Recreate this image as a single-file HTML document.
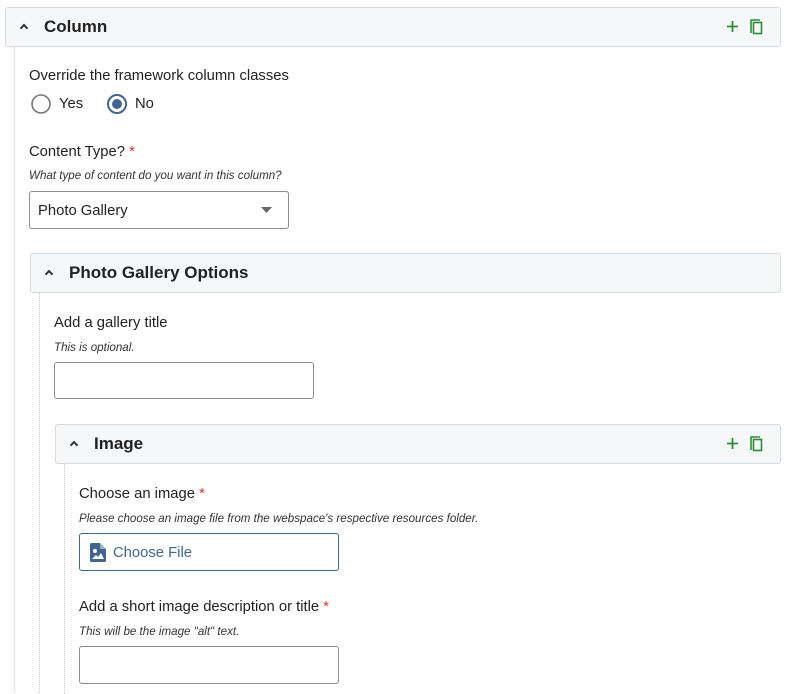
<!DOCTYPE html>
<html><head><meta charset="utf-8"><style>
*{box-sizing:border-box;margin:0;padding:0}
body{width:790px;height:692px;background:#fff;font-family:"Liberation Sans",sans-serif;color:#222;position:relative;overflow:hidden}
.a{position:absolute}
.hdr{position:absolute;background:#f6f7f9;border:1px solid #d6d9de;border-radius:3px;height:40px}
.hdr .t{position:absolute;left:38px;top:9px;font-size:17px;font-weight:bold;color:#222}
.hdr .car{position:absolute;left:15px;top:17px;width:6px;height:6px;border-left:2px solid #333;border-top:2px solid #333;transform:rotate(45deg)}
.dot{position:absolute;border-left:1px dotted #c8cbcf;width:0}
.lbl{position:absolute;font-size:14.8px;color:#222}
.req{color:#d0342c}
.hint{position:absolute;font-size:11.6px;font-style:italic;color:#333}
.inp{position:absolute;border:1px solid #8a8d91;border-radius:3px;background:#fff}
.icons{position:absolute;right:16px;top:9px}
</style></head><body>

<div class="hdr" style="left:5px;top:7px;width:776px"><div class="car"></div><div class="t">Column</div>
<svg class="icons" width="40" height="20" viewBox="0 0 40 20"><path d="M3 9.5h11M8.5 4v11" stroke="#2f8a3a" stroke-width="1.8"/><path d="M27 16V3h9" fill="none" stroke="#2f8a3a" stroke-width="1.6"/><rect x="29.5" y="5.5" width="8" height="11" fill="none" stroke="#2f8a3a" stroke-width="1.6"/></svg></div>
<div class="dot" style="left:14px;top:47px;height:645px"></div>

<div class="lbl" style="left:29px;top:68px">Override the framework column classes</div>
<svg class="a" style="left:30px;top:93px" width="22" height="22"><circle cx="11" cy="11" r="9" fill="#fff" stroke="#777" stroke-width="1.6"/></svg>
<div class="lbl" style="left:59px;top:96px">Yes</div>
<svg class="a" style="left:106px;top:93px" width="22" height="22"><circle cx="11" cy="11" r="9" fill="#fff" stroke="#40668f" stroke-width="2"/><circle cx="11" cy="11" r="5" fill="#40668f"/></svg>
<div class="lbl" style="left:135px;top:96px">No</div>

<div class="lbl" style="left:29px;top:144px">Content Type? <span class="req">*</span></div>
<div class="hint" style="left:29px;top:169px">What type of content do you want in this column?</div>
<div class="inp" style="left:29px;top:191px;width:260px;height:38px"><span class="a" style="left:8px;top:11px;font-size:14.8px">Photo Gallery</span>
<svg class="a" style="left:231px;top:14px" width="12" height="8"><path d="M0 1h11L5.5 7z" fill="#666"/></svg></div>

<div class="hdr" style="left:30px;top:253px;width:751px"><div class="car"></div><div class="t">Photo Gallery Options</div></div>
<div class="dot" style="left:39px;top:293px;height:400px"></div>

<div class="lbl" style="left:54px;top:315px">Add a gallery title</div>
<div class="hint" style="left:54px;top:341px">This is optional.</div>
<div class="inp" style="left:54px;top:362px;width:260px;height:37px"></div>

<div class="hdr" style="left:55px;top:424px;width:726px"><div class="car"></div><div class="t">Image</div>
<svg class="icons" width="40" height="20" viewBox="0 0 40 20"><path d="M3 9.5h11M8.5 4v11" stroke="#2f8a3a" stroke-width="1.8"/><path d="M27 16V3h9" fill="none" stroke="#2f8a3a" stroke-width="1.6"/><rect x="29.5" y="5.5" width="8" height="11" fill="none" stroke="#2f8a3a" stroke-width="1.6"/></svg></div>
<div class="dot" style="left:64px;top:464px;height:230px"></div>

<div class="lbl" style="left:79px;top:486px">Choose an image <span class="req">*</span></div>
<div class="hint" style="left:79px;top:512px">Please choose an image file from the webspace's respective resources folder.</div>
<div class="inp" style="left:79px;top:533px;width:260px;height:38px;border-color:#40668f">
<svg class="a" style="left:10px;top:9px" width="16" height="19" viewBox="0 0 16 19"><path d="M0 1.5Q0 0 1.5 0H10l6 6v11.5Q16 19 14.5 19h-13Q0 19 0 17.5z" fill="#40668f"/><path d="M10 0v6h6" fill="#9fb3c8"/><circle cx="5" cy="8" r="2" fill="#fff"/><path d="M2 16l4-4 2 2 3-4 3 6z" fill="#fff"/></svg>
<span class="a" style="left:33px;top:11px;font-size:14.8px;color:#40668f">Choose File</span></div>

<div class="lbl" style="left:79px;top:599px">Add a short image description or title <span class="req">*</span></div>
<div class="hint" style="left:79px;top:625px">This will be the image "alt" text.</div>
<div class="inp" style="left:79px;top:646px;width:260px;height:38px"></div>
</body></html>
